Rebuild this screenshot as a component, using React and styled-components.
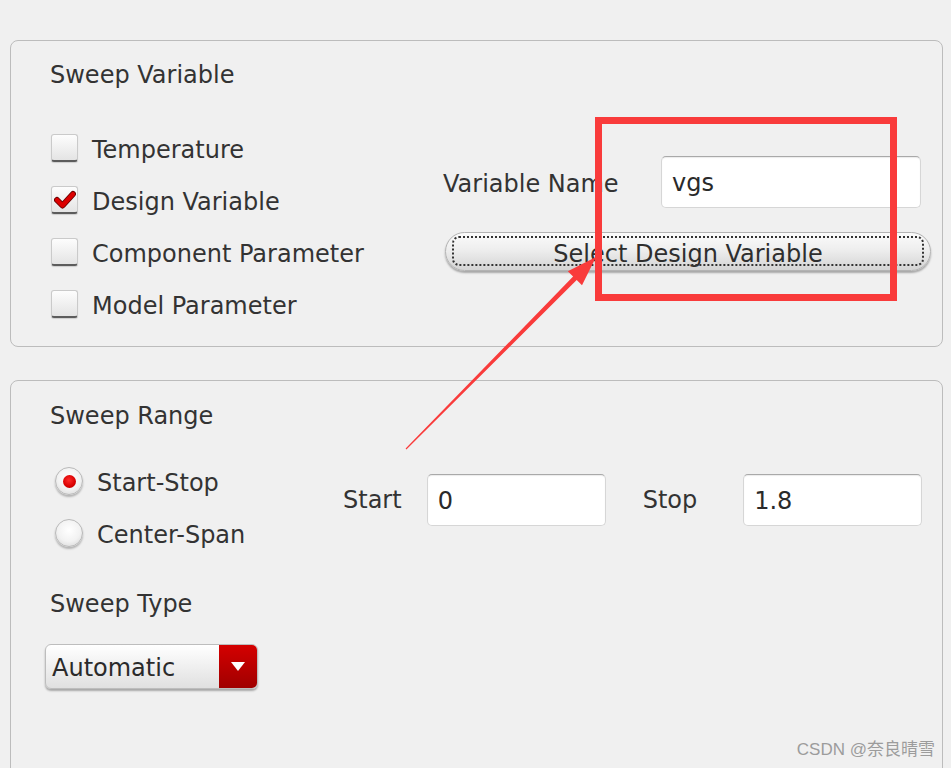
import React from "react";
import styled, { createGlobalStyle } from "styled-components";

const GlobalStyle = createGlobalStyle`
  html, body { margin: 0; padding: 0; background: #f0f0f0; }
  body { font-family: "DejaVu Sans", "Noto Sans", sans-serif; }
`;

const Page = styled.div`
  position: relative;
  box-sizing: border-box;
  width: 951px;
  height: 768px;
  overflow: hidden;
  padding: 40px 8px 0 10px;
  background: #f0f0f0;
  color: #333;
  font-family: "DejaVu Sans", sans-serif;
  font-size: 24px;
  display: flex;
  flex-direction: column;
  gap: 33px;
`;

const Panel = styled.section`
  box-sizing: border-box;
  border: 1px solid #bcbcbc;
  border-radius: 8px;
  padding: ${(p) => p.$pt}px 0 16px 39px;
  flex-shrink: 0;
  ${(p) => (p.$tall ? "height: 440px;" : "")}
`;

const Title = styled.div`
  line-height: 28px;
  height: 28px;
  white-space: nowrap;
  margin-bottom: ${(p) => p.$mb || 0}px;
  margin-top: ${(p) => p.$mt || 0}px;
`;

const Body = styled.div`
  display: flex;
`;

const LeftCol = styled.div`
  width: ${(p) => p.$w}px;
  flex-shrink: 0;
  display: flex;
  flex-direction: column;
`;

const OptionRow = styled.label`
  height: 52px;
  display: flex;
  align-items: center;
  gap: 14px;
  white-space: nowrap;
  line-height: 28px;
`;

const OptionText = styled.span`
  padding-top: 4px;
`;

const CheckBox = styled.span`
  box-sizing: border-box;
  margin-left: 1px;
  width: 27px;
  height: 28px;
  border-radius: 3px;
  border: 1px solid #cacaca;
  border-bottom: 2px solid #5c5c5c;
  background: linear-gradient(#fdfdfd, #e4e4e4);
  box-shadow: 0 1px 1px rgba(0, 0, 0, 0.15);
  display: flex;
  align-items: center;
  justify-content: center;
  flex-shrink: 0;
`;

const Radio = styled.span`
  box-sizing: border-box;
  margin-left: 5px;
  width: 28px;
  height: 28px;
  border-radius: 50%;
  border: 1px solid #b9b9b9;
  background: radial-gradient(circle at 50% 40%, #ffffff 0%, #f2f2f2 55%, #d2d2d2 100%);
  box-shadow: 0 2px 2px rgba(0, 0, 0, 0.25);
  display: flex;
  align-items: center;
  justify-content: center;
  flex-shrink: 0;
`;

const RadioDot = styled.span`
  width: 13px;
  height: 13px;
  border-radius: 50%;
  background: radial-gradient(circle at 45% 40%, #ff2a2a 0%, #d80000 60%, #9a0000 100%);
`;

const RightCol = styled.div`
  padding-top: ${(p) => p.$pt}px;
  display: flex;
  flex-direction: column;
`;

const FieldRow = styled.div`
  display: flex;
  align-items: center;
`;

const FieldLabel = styled.span`
  width: ${(p) => (p.$w ? `${p.$w}px` : "auto")};
  margin-right: ${(p) => p.$mr || 0}px;
  padding-top: ${(p) => p.$dy || 0}px;
  white-space: nowrap;
  flex-shrink: 0;
`;

const TextInput = styled.div`
  box-sizing: border-box;
  width: ${(p) => p.$w}px;
  height: 52px;
  margin-right: ${(p) => p.$mr || 0}px;
  background: #fff;
  border: 1px solid #d6d6d6;
  border-top-color: #a9a9a9;
  border-radius: 5px;
  box-shadow: inset 0 1px 1px rgba(0, 0, 0, 0.08);
  padding: 2px 10px 0 10px;
  display: flex;
  align-items: center;
  color: #2a2a2a;
  flex-shrink: 0;
`;

const PushButton = styled.div`
  box-sizing: border-box;
  position: relative;
  margin-top: 24px;
  margin-left: 2px;
  width: 486px;
  height: 39px;
  padding-top: 4px;
  border-radius: 20px;
  border: 1px solid #b3b3b3;
  background: linear-gradient(#fbfbfb 0%, #eeeeee 45%, #d4d4d4 100%);
  box-shadow: 0 2px 2px rgba(0, 0, 0, 0.3);
  display: flex;
  align-items: center;
  justify-content: center;
  color: #2e2e2e;
  white-space: nowrap;
  &::after {
    content: "";
    position: absolute;
    inset: 3px 6px 4px 6px;
    border: 2px dotted #333;
    border-radius: 7px;
  }
`;

const Dropdown = styled.div`
  box-sizing: border-box;
  margin-left: -5px;
  width: 213px;
  height: 45px;
  border-radius: 6px;
  border: 1px solid #bdbdbd;
  background: linear-gradient(#ffffff, #e0e0e0);
  box-shadow: 0 2px 2px rgba(0, 0, 0, 0.3);
  display: flex;
  overflow: hidden;
`;

const DropText = styled.span`
  flex: 1;
  padding: 3px 0 0 6px;
  display: flex;
  align-items: center;
  color: #2a2a2a;
`;

const DropArrow = styled.span`
  width: 38px;
  background: linear-gradient(#d40000, #a00000);
  display: flex;
  align-items: center;
  justify-content: center;
`;

const Overlay = styled.svg`
  position: absolute;
  left: 0;
  top: 0;
  pointer-events: none;
`;

const Watermark = styled.div`
  position: absolute;
  right: 16px;
  bottom: 8px;
  font-family: "Liberation Sans", "Noto Sans CJK SC", sans-serif;
  font-size: 17px;
  color: #9c9c9c;
  white-space: nowrap;
`;

const CheckMark = () => (
  <svg width="22" height="20" viewBox="0 0 22 20">
    <polyline points="3,10 8.5,15.5 19,4" fill="none" stroke="#6a0000" strokeWidth="6" strokeLinecap="round" strokeLinejoin="round" />
    <polyline points="3,10 8.5,15.5 19,4" fill="none" stroke="#dc0000" strokeWidth="4.2" strokeLinecap="round" strokeLinejoin="round" />
  </svg>
);

const Tri = () => (
  <svg width="14" height="9" viewBox="0 0 14 9">
    <path d="M0 0 H14 L7 9 Z" fill="#fff" />
  </svg>
);

const checks = [
  { label: "Temperature", on: false },
  { label: "Design Variable", on: true },
  { label: "Component Parameter", on: false },
  { label: "Model Parameter", on: false },
];

const radios = [
  { label: "Start-Stop", on: true },
  { label: "Center-Span", on: false },
];

export default function App() {
  return (
    <>
      <GlobalStyle />
      <Page>
        <Panel $pt={20}>
          <Title $mb={33}>Sweep Variable</Title>
          <Body>
            <LeftCol $w={393}>
              {checks.map((c) => (
                <OptionRow key={c.label}>
                  <CheckBox>{c.on && <CheckMark />}</CheckBox>
                  <OptionText>{c.label}</OptionText>
                </OptionRow>
              ))}
            </LeftCol>
            <RightCol $pt={34}>
              <FieldRow>
                <FieldLabel $w={218} $dy={4}>Variable Name</FieldLabel>
                <TextInput $w={260}>vgs</TextInput>
              </FieldRow>
              <PushButton>Select Design Variable</PushButton>
            </RightCol>
          </Body>
        </Panel>

        <Panel $pt={21} $tall>
          <Title $mb={25}>Sweep Range</Title>
          <Body>
            <LeftCol $w={293}>
              {radios.map((r) => (
                <OptionRow key={r.label}>
                  <Radio>{r.on && <RadioDot />}</Radio>
                  <OptionText>{r.label}</OptionText>
                </OptionRow>
              ))}
            </LeftCol>
            <RightCol $pt={19}>
              <FieldRow>
                <FieldLabel $mr={25}>Start</FieldLabel>
                <TextInput $w={179} $mr={37}>0</TextInput>
                <FieldLabel $mr={46}>Stop</FieldLabel>
                <TextInput $w={179}>1.8</TextInput>
              </FieldRow>
            </RightCol>
          </Body>
          <Title $mt={31} $mb={26}>Sweep Type</Title>
          <Dropdown>
            <DropText>Automatic</DropText>
            <DropArrow>
              <Tri />
            </DropArrow>
          </Dropdown>
        </Panel>

        <Overlay width="951" height="768" viewBox="0 0 951 768">
          <rect x="598.5" y="120.5" width="295" height="177" fill="none" stroke="#f93b3b" strokeWidth="7" />
          <polygon
            points="406.4,449.4 576.7,280.1 582.0,285.3 596,257 567.8,271.3 573.1,276.5 405.6,448.6"
            fill="#f93b3b"
          />
        </Overlay>
        <Watermark>CSDN @奈良晴雪</Watermark>
      </Page>
    </>
  );
}
